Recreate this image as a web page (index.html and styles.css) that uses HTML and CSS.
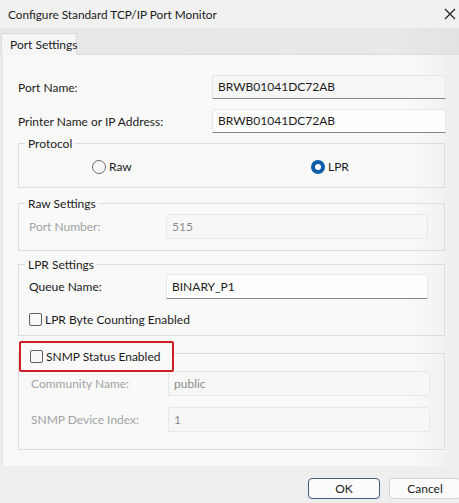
FILE: index.html
```html
<!DOCTYPE html>
<html lang="en">
<head>
  <meta charset="UTF-8" />
  <meta name="viewport" content="width=device-width, initial-scale=1.0"/>
  <title>Configure Standard TCP/IP Port Monitor</title>
  <link rel="stylesheet" href="styles.css">
</head>
<body>

  <div class="window">
    <div class="titlebar">
      <span class="title">Configure Standard TCP/IP Port Monitor</span>
      <svg class="close" width="12" height="12" viewBox="0 0 12 12">
        <path d="M1 1 L11 11 M11 1 L1 11" stroke="#1c1c1c" stroke-width="1.1" fill="none"/>
      </svg>
    </div>

    <div class="tabstrip">
      <div class="tab">Port Settings</div>
    </div>

    <div class="panel">
      <div class="row">
        <span class="label">Port Name:</span>
        <div class="input readonly">BRWB01041DC72AB</div>
      </div>
      <div class="row">
        <span class="label">Printer Name or IP Address:</span>
        <div class="input">BRWB01041DC72AB</div>
      </div>

      <div class="group protocol">
        <span class="legend">Protocol</span>
        <div class="radios">
          <label class="radio raw"><span class="dot"></span>Raw</label>
          <label class="radio"><span class="dot on"></span>LPR</label>
        </div>
      </div>

      <div class="group raw-settings">
        <span class="legend">Raw Settings</span>
        <div class="field disabled">
          <span class="flabel">Port Number:</span>
          <div class="finput">515</div>
        </div>
      </div>

      <div class="group lpr-settings">
        <span class="legend">LPR Settings</span>
        <div class="field">
          <span class="flabel">Queue Name:</span>
          <div class="finput active">BINARY_P1</div>
        </div>
        <label class="check"><span class="box"></span>LPR Byte Counting Enabled</label>
      </div>

      <div class="group snmp">
        <label class="legend check highlight"><span class="box"></span>SNMP Status Enabled</label>
        <div class="field disabled">
          <span class="flabel">Community Name:</span>
          <div class="finput">public</div>
        </div>
        <div class="field disabled">
          <span class="flabel">SNMP Device Index:</span>
          <div class="finput">1</div>
        </div>
      </div>
    </div>

    <div class="footer">
      <button class="btn default">OK</button>
      <button class="btn">Cancel</button>
    </div>
  </div>

</body>
</html>
```

FILE: styles.css
```css
* {
  box-sizing: border-box;
}

body {
  margin: 0;
  background-color: #efefef;
  color: #1b1b1b;
  font-family: Lato, 'Noto Sans', sans-serif;
  font-size: 12px;
}

.window {
  width: 459px;
  height: 503px;
  overflow: hidden;
  background-color: #efefef;
}

.titlebar {
  height: 28px;
  display: flex;
  align-items: center;
  justify-content: space-between;
  padding: 0 3px 0 8px;
  background-color: #f1f1f1;
}

.title {
  font-size: 11.8px;
  color: #1a1a1a;
}

.tabstrip {
  height: 27px;
  padding: 5px 0 0 1px;
  background: linear-gradient(to right, #e7e7e7, #e9e9e9 85%, #e2e2e2);
  border-bottom: 1px solid #dcdcdc;
}

.tab {
  width: 76px;
  height: 22px;
  line-height: 21px;
  padding-left: 8px;
  white-space: nowrap;
  background-color: #f5f5f5;
  border: 1px solid #dadada;
  border-bottom: none;
}

.panel {
  width: 445px;
  height: 411px;
  margin-left: 2px;
  padding: 20px 0 0 15px;
  background: linear-gradient(to right, #f9f9f9, #f9f9f9 92%, #f1f1f1);
  border-left: 1px solid #e2e2e2;
}

.row {
  display: flex;
  align-items: center;
  width: 428px;
  height: 24px;
  margin-bottom: 10px;
}

.label {
  width: 194px;
}

.input {
  flex: 1;
  height: 24px;
  line-height: 22px;
  padding-left: 5px;
  background-color: #fdfdfd;
  border: 1px solid #e6e6e6;
  border-bottom: 1px solid #868686;
  border-radius: 3px 3px 0 0;
}

.input.readonly {
  background-color: #f6f6f6;
}

.group {
  position: relative;
  width: 427px;
  border: 1px solid #dcdcdc;
}

.legend {
  position: absolute;
  top: -9px;
  left: 6px;
  padding: 0 3px;
  background-color: #f9f9f9;
  line-height: 17px;
}

.protocol {
  margin-top: 3px;
  height: 45px;
  padding: 14px 0 0 73px;
}

.radios {
  display: flex;
  align-items: center;
}

.radio {
  display: flex;
  align-items: center;
  gap: 3px;
  height: 17px;
}

.radio.raw {
  width: 219px;
}

.dot {
  width: 14px;
  height: 14px;
  border-radius: 50%;
  border: 1px solid #6a6a6a;
  background-color: #f7f7f7;
}

.dot.on {
  border: 4px solid #0a5ea8;
  background-color: #ffffff;
}

.raw-settings {
  margin-top: 15px;
  height: 48px;
  padding-top: 10px;
}

.field {
  display: flex;
  align-items: center;
  height: 25px;
  padding-left: 10px;
}

.flabel {
  width: 137px;
}

.finput {
  width: 262px;
  height: 25px;
  line-height: 23px;
  padding-left: 5px;
  border: 1px solid #e8e8e8;
  border-radius: 3px 3px 0 0;
  background-color: #f7f7f7;
}

.finput.active {
  background-color: #fdfdfd;
  border-bottom: 1px solid #868686;
}

.disabled .flabel {
  color: #a2a2a2;
}

.disabled .finput {
  color: #8c8c8c;
}

.lpr-settings {
  margin-top: 13px;
  height: 72px;
  padding-top: 9px;
}

.check {
  display: flex;
  align-items: center;
  gap: 3px;
  height: 17px;
  margin: 12px 0 0 10px;
}

.box {
  width: 13px;
  height: 13px;
  border: 1px solid #5f5f5f;
  border-radius: 2px;
  background-color: #f8f8f8;
}

.snmp {
  margin-top: 17px;
  height: 97px;
  padding-top: 17px;
}

.snmp .field + .field {
  margin-top: 11px;
}

.snmp .field {
  padding-left: 12px;
}

.legend.check {
  top: -13px;
  left: 0;
  width: 155px;
  height: 31px;
  margin: 0;
  padding: 0 0 0 9px;
  border: 2px solid #cc1f27;
  border-radius: 2px;
  background-color: #f9f9f9;
}

.footer {
  height: 38px;
  display: flex;
  justify-content: flex-end;
  gap: 9px;
  padding: 12px 0 0 0;
  margin-right: -2px;
  background-color: #eeeeee;
}

.btn {
  width: 72px;
  height: 21px;
  padding: 0;
  font-family: Lato, 'Noto Sans', sans-serif;
  font-size: 12px;
  color: #1b1b1b;
  background-color: #fbfbfb;
  border: 1px solid #d3d3d3;
  border-radius: 4px;
}

.btn.default {
  border: 1.5px solid #3d5f80;
}
```
